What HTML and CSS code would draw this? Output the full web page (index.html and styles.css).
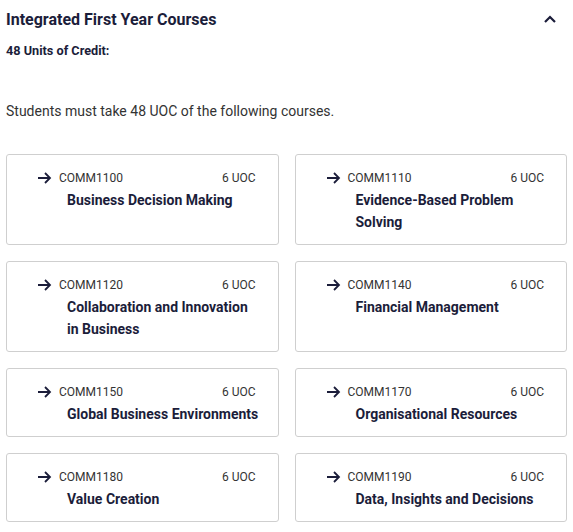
FILE: index.html
```html
<!DOCTYPE html>
<html lang="en">
<head>
    <meta charset="UTF-8">
    <title>Integrated First Year Courses</title>
    <link rel="stylesheet" href="styles.css">
</head>
<body>
    <section class="group">
        <div class="group-head">
            <h2>Integrated First Year Courses</h2>
            <svg class="chevron" width="14" height="10" viewBox="0 0 14 10">
                <path d="M2 8 L7 3 L12 8" fill="none" stroke="#1b1d3a" stroke-width="2.2"/>
            </svg>
        </div>
        <p class="credit">48 Units of Credit:</p>
        <p class="desc">Students must take 48 UOC of the following courses.</p>

        <div class="courses">
            <a class="course" href="#">
                <div class="course-top">
                    <svg class="arrow" width="15" height="12" viewBox="0 0 15 12"><path d="M1 6 H13 M8 1 L13 6 L8 11" fill="none" stroke="#1b1d3a" stroke-width="1.8"/></svg>
                    <span class="code">COMM1100</span>
                    <span class="uoc">6 UOC</span>
                </div>
                <div class="name">Business Decision Making</div>
            </a>
            <a class="course" href="#">
                <div class="course-top">
                    <svg class="arrow" width="15" height="12" viewBox="0 0 15 12"><path d="M1 6 H13 M8 1 L13 6 L8 11" fill="none" stroke="#1b1d3a" stroke-width="1.8"/></svg>
                    <span class="code">COMM1110</span>
                    <span class="uoc">6 UOC</span>
                </div>
                <div class="name">Evidence-Based Problem Solving</div>
            </a>
            <a class="course" href="#">
                <div class="course-top">
                    <svg class="arrow" width="15" height="12" viewBox="0 0 15 12"><path d="M1 6 H13 M8 1 L13 6 L8 11" fill="none" stroke="#1b1d3a" stroke-width="1.8"/></svg>
                    <span class="code">COMM1120</span>
                    <span class="uoc">6 UOC</span>
                </div>
                <div class="name">Collaboration and Innovation in Business</div>
            </a>
            <a class="course" href="#">
                <div class="course-top">
                    <svg class="arrow" width="15" height="12" viewBox="0 0 15 12"><path d="M1 6 H13 M8 1 L13 6 L8 11" fill="none" stroke="#1b1d3a" stroke-width="1.8"/></svg>
                    <span class="code">COMM1140</span>
                    <span class="uoc">6 UOC</span>
                </div>
                <div class="name">Financial Management</div>
            </a>
            <a class="course" href="#">
                <div class="course-top">
                    <svg class="arrow" width="15" height="12" viewBox="0 0 15 12"><path d="M1 6 H13 M8 1 L13 6 L8 11" fill="none" stroke="#1b1d3a" stroke-width="1.8"/></svg>
                    <span class="code">COMM1150</span>
                    <span class="uoc">6 UOC</span>
                </div>
                <div class="name">Global Business Environments</div>
            </a>
            <a class="course" href="#">
                <div class="course-top">
                    <svg class="arrow" width="15" height="12" viewBox="0 0 15 12"><path d="M1 6 H13 M8 1 L13 6 L8 11" fill="none" stroke="#1b1d3a" stroke-width="1.8"/></svg>
                    <span class="code">COMM1170</span>
                    <span class="uoc">6 UOC</span>
                </div>
                <div class="name">Organisational Resources</div>
            </a>
            <a class="course" href="#">
                <div class="course-top">
                    <svg class="arrow" width="15" height="12" viewBox="0 0 15 12"><path d="M1 6 H13 M8 1 L13 6 L8 11" fill="none" stroke="#1b1d3a" stroke-width="1.8"/></svg>
                    <span class="code">COMM1180</span>
                    <span class="uoc">6 UOC</span>
                </div>
                <div class="name">Value Creation</div>
            </a>
            <a class="course" href="#">
                <div class="course-top">
                    <svg class="arrow" width="15" height="12" viewBox="0 0 15 12"><path d="M1 6 H13 M8 1 L13 6 L8 11" fill="none" stroke="#1b1d3a" stroke-width="1.8"/></svg>
                    <span class="code">COMM1190</span>
                    <span class="uoc">6 UOC</span>
                </div>
                <div class="name">Data, Insights and Decisions</div>
            </a>
        </div>
    </section>
</body>
</html>
```

FILE: styles.css
```css
body {
    margin: 0;
    font-family: Roboto, "Liberation Sans", sans-serif;
    color: #1b1d3a;
    background: #fff;
}
.group {
    padding: 0 6px;
}
.group-head {
    display: flex;
    align-items: center;
    justify-content: space-between;
    height: 38px;
}
.group-head h2 {
    margin: 0;
    font-size: 16px;
    font-weight: 700;
}
.chevron {
    margin-right: 10px;
}
.credit {
    margin: 5px 0 0;
    font-size: 12.7px;
    font-weight: 700;
    line-height: 16px;
}
.desc {
    margin: 42px 0 0;
    font-size: 14px;
    line-height: 20px;
    color: #333;
}
.courses {
    display: grid;
    grid-template-columns: 1fr 1fr;
    gap: 16px;
    margin-top: 33px;
}
.course {
    display: block;
    padding: 14px 14px 11px 30px;
    border: 1px solid #cfcfcf;
    border-radius: 3px;
    text-decoration: none;
    color: inherit;
}
.course-top {
    display: flex;
    align-items: center;
    height: 18px;
    padding-right: 8px;
}
.arrow {
    margin-right: 7px;
}
.code {
    font-size: 12px;
    color: #333;
}
.uoc {
    margin-left: auto;
    font-size: 12px;
    color: #333;
}
.name {
    margin: 2px 4px 0 30px;
    font-size: 14px;
    font-weight: 700;
    line-height: 22px;
}
```
